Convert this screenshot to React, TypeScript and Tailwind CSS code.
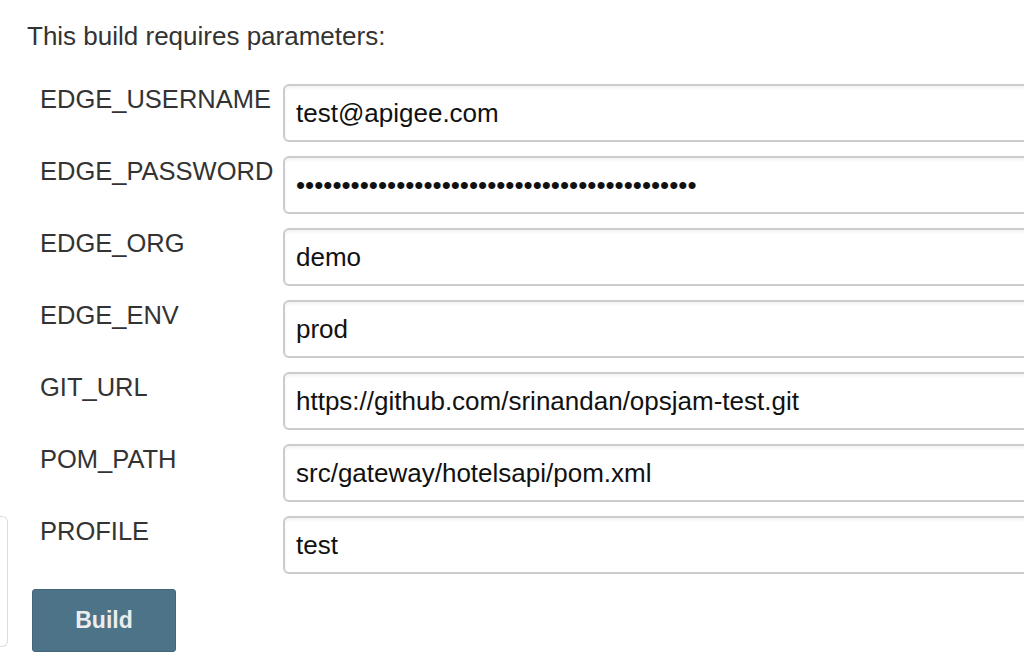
import React from "react";

interface Param {
    name: string;
    value: string;
    password?: boolean;
}

const params: Param[] = [
    { name: "EDGE_USERNAME", value: "test@apigee.com" },
    { name: "EDGE_PASSWORD", value: "x".repeat(44), password: true },
    { name: "EDGE_ORG", value: "demo" },
    { name: "EDGE_ENV", value: "prod" },
    { name: "GIT_URL", value: "https://github.com/srinandan/opsjam-test.git" },
    { name: "POM_PATH", value: "src/gateway/hotelsapi/pom.xml" },
    { name: "PROFILE", value: "test" },
];

export default function App() {
    return (
        <div className="flex w-[1024px] h-[666px] overflow-hidden bg-white font-['Liberation_Sans',Arial,sans-serif]">
            {/* cut-off side box */}
            <div className="w-[8px] shrink-0">
                <div className="mt-[516px] h-[131px] w-[8px] border border-l-0 border-[#dcdcdc] rounded-r-[6px]" />
            </div>

            <div className="pl-[19px] flex-1">
                <div className="mt-[21px] text-[26px] leading-[30px] text-[#333]">This build requires parameters:</div>

                <div className="mt-[33px] ml-[13px] flex flex-col gap-[14px]">
                    {params.map((p) => (
                        <div key={p.name} className="flex items-start">
                            <div className="w-[243px] shrink-0 text-[25.5px] leading-[30px] text-[#333]">{p.name}</div>
                            <input
                                type={p.password ? "password" : "text"}
                                defaultValue={p.value}
                                readOnly
                                className="w-[800px] h-[58px] shrink-0 border-2 border-[#cccccc] rounded-[6px] pl-[11px] text-[26px] text-[#111] bg-white shadow-[inset_0_2px_3px_rgba(0,0,0,0.06)] outline-none"
                            />
                        </div>
                    ))}
                </div>

                <button className="mt-[15px] ml-[5px] w-[144px] h-[63px] bg-[#4d7389] border border-[#436579] rounded-[3px] text-[23px] font-bold text-[#ececec]">
                    Build
                </button>
            </div>
        </div>
    );
}
